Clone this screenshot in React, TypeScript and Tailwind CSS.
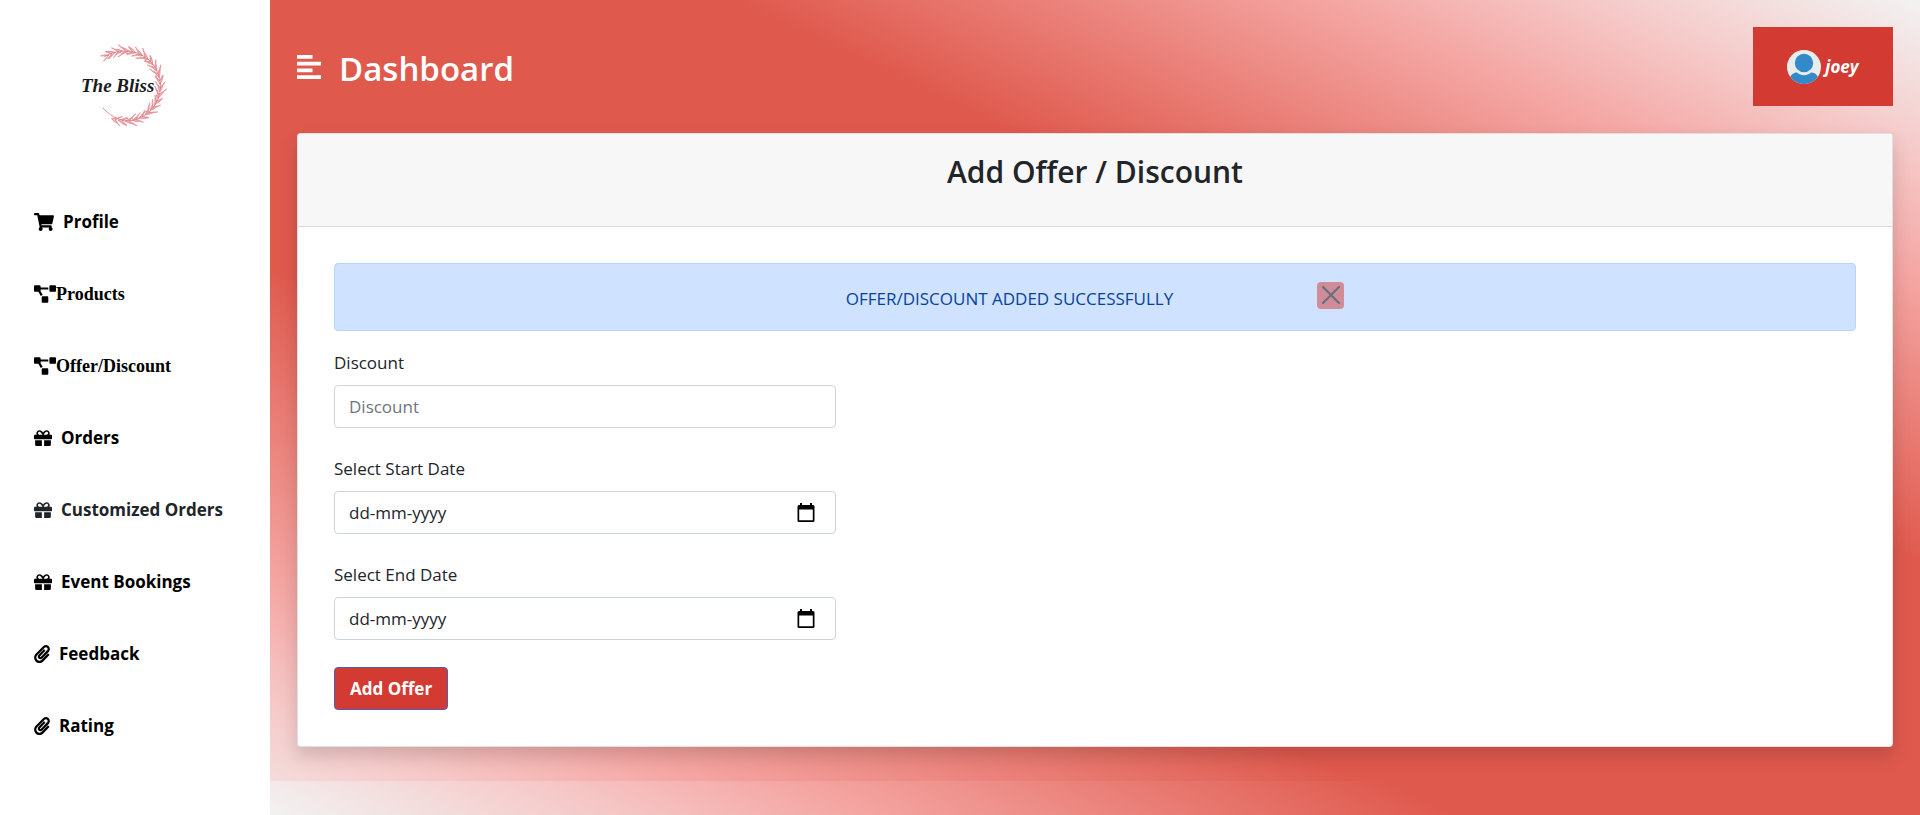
import { FaGift, FaPaperclip, FaProjectDiagram, FaShoppingCart } from "react-icons/fa";
import type { IconType } from "react-icons";

type NavItem = { label: string; icon: IconType; link: string; iconSize: string };

const SANS = "gap-[9px] font-['Open_Sans',sans-serif] text-[17px] text-black";
const SERIF = "font-['Liberation_Serif',serif] text-[18px] text-black";

const NAV: NavItem[] = [
  { label: "Profile", icon: FaShoppingCart, link: SANS, iconSize: "h-[18px] w-5" },
  { label: "Products", icon: FaProjectDiagram, link: SERIF, iconSize: "h-[18px] w-[22px]" },
  { label: "Offer/Discount", icon: FaProjectDiagram, link: SERIF, iconSize: "h-[18px] w-[22px]" },
  { label: "Orders", icon: FaGift, link: SANS, iconSize: "h-[18px] w-[18px]" },
  {
    label: "Customized Orders",
    icon: FaGift,
    link: "gap-[9px] font-['Open_Sans',sans-serif] text-[17px] text-[#212529]",
    iconSize: "h-[18px] w-[18px]",
  },
  { label: "Event Bookings", icon: FaGift, link: SANS, iconSize: "h-[18px] w-[18px]" },
  { label: "Feedback", icon: FaPaperclip, link: SANS, iconSize: "h-[18px] w-4" },
  { label: "Rating", icon: FaPaperclip, link: SANS, iconSize: "h-[18px] w-4" },
];

/* Leaves are placed in pairs along an open ring, fanning out along its direction. */
function Wreath() {
  const cx = 55;
  const cy = 51;
  const r = 35;
  const leaves: string[] = [];
  const count = 40;
  for (let i = 0; i <= count; i++) {
    const t = i / count;
    const a = ((112 - t * 230) * Math.PI) / 180;
    const x = cx + r * Math.cos(a);
    const y = cy + r * Math.sin(a);
    const len = 6 + (i % 3) * 1.6;
    for (const side of [-1, 1]) {
      const d = a - Math.PI / 2 + side * (0.4 + (i % 2) * 0.3);
      const ex = x + len * Math.cos(d);
      const ey = y + len * Math.sin(d);
      const mx = (x + ex) / 2 + side * 1.4 * Math.cos(d + Math.PI / 2);
      const my = (y + ey) / 2 + side * 1.4 * Math.sin(d + Math.PI / 2);
      leaves.push(
        `M${x.toFixed(1)} ${y.toFixed(1)}Q${mx.toFixed(1)} ${my.toFixed(1)} ${ex.toFixed(1)} ${ey.toFixed(1)}Z`,
      );
    }
  }
  return (
    <g stroke="#e39298" fill="#f3c0c3" strokeWidth="0.8" strokeLinecap="round">
      <path d={leaves.join("")} />
      <path d="M33 73C39 80 48 85 56 86A35 35 0 0 0 55 16C47 16 40 18 34 22" fill="none" stroke="#d9777f" />
    </g>
  );
}

function Logo() {
  return (
    <svg viewBox="0 0 110 100" className="h-[100px] w-[110px]" role="img" aria-label="The Bliss">
      <Wreath />
      <text
        x="11"
        y="57"
        fill="#1b1b1b"
        fontFamily="'Liberation Serif', serif"
        fontStyle="italic"
        fontWeight="700"
        fontSize="19"
      >
        The Bliss
      </text>
    </svg>
  );
}

function Avatar() {
  return (
    <svg viewBox="0 0 34 34" className="h-[34px] w-[34px]" aria-hidden="true">
      <clipPath id="avatar-clip">
        <circle cx="17" cy="17" r="17" />
      </clipPath>
      <g clipPath="url(#avatar-clip)">
        <rect width="34" height="34" fill="#e9ecec" />
        <path d="M2 29C4 24 8 22 10 22.500C14 26 20 26 24 22.500C27 22 30 24 32 29V34H2Z" fill="#3489c9" />
        <circle cx="17" cy="13" r="9.200" fill="#3489c9" />
      </g>
    </svg>
  );
}

function MenuIcon() {
  return (
    <svg viewBox="0 0 24 24" className="h-6 w-6" fill="currentColor" aria-hidden="true">
      <path d="M0 0H15.500V3.800H0ZM0 6.700H24V10.500H0ZM0 13.500H15.500V17.300H0ZM0 20.200H24V24H0Z" />
    </svg>
  );
}

function CalendarIcon() {
  return (
    <svg viewBox="0 0 18 20" className="h-5 w-[18px]" aria-hidden="true">
      <path
        fill="#000"
        fillRule="evenodd"
        d="M3 0H5V2H13V0H15V2H16A1.500 1.500 0 0 1 17.500 3.500V17.500A1.500 1.500 0 0 1 16 19H2A1.500 1.500 0 0 1 .5 17.500V3.500A1.500 1.500 0 0 1 2 2H3ZM2.200 6.500V17.300H15.800V6.500Z"
      />
    </svg>
  );
}

function DateField({ id, label }: { id: string; label: string }) {
  return (
    <div className="mb-[27px]">
      <label htmlFor={id} className="mb-[9px] block leading-[27px]">
        {label}
      </label>
      <div className="flex h-[43px] w-[33%] items-center rounded border border-[#ced4da] bg-white pr-5 pl-[14px]">
        <input
          id={id}
          type="text"
          placeholder="dd-mm-yyyy"
          className="min-w-0 flex-1 bg-transparent outline-none placeholder:text-[#212529]"
        />
        <button type="button" aria-label={`Open calendar: ${label}`}>
          <CalendarIcon />
        </button>
      </div>
    </div>
  );
}

export default function App() {
  return (
    <div className="flex min-h-screen font-['Open_Sans',sans-serif] text-[17px] text-[#212529]">
      <aside className="w-[270px] shrink-0 bg-white">
        <div className="flex h-[186px] pt-[35px] pl-[70px]">
          <Logo />
        </div>
        <nav>
          <ul>
            {NAV.map(({ label, icon: Icon, link, iconSize }) => (
              <li key={label}>
                <a href="#" className={`flex h-[72px] items-center pl-[34px] font-bold ${link}`}>
                  <Icon className={iconSize} />
                  {label}
                </a>
              </li>
            ))}
          </ul>
        </nav>
      </aside>

      <div className="flex min-w-0 flex-1 flex-col bg-[linear-gradient(to_bottom_left,#f2f2f2_0%,#f5c9c8_10%,#f4a5a2_18%,#df594d_36%,#df594d_64%,#f4a5a2_82%,#f5c9c8_90%,#f2f2f2_100%)]">
        <main className="bg-[linear-gradient(to_bottom_left,#f2f2f2_0%,#f5c9c8_10%,#f4a5a2_18%,#df594d_36%,#df594d_67%,#f4a5a2_87%,#f5c9c8_95%,#f2f2f2_106%)] px-[27px] pt-[27px] pb-[34px]">
          <header className="mb-[27px] flex items-center justify-between">
            <div className="flex items-center gap-[18px] text-white">
              <button type="button" aria-label="Toggle menu">
                <MenuIcon />
              </button>
              <h2 className="pt-1 text-[33px] leading-[43px] font-semibold">Dashboard</h2>
            </div>
            <button
              type="button"
              className="flex h-[79px] w-[140px] items-center justify-center gap-1 bg-[#d33a32] font-bold text-white italic"
            >
              <Avatar />
              joey
            </button>
          </header>

          <section className="rounded border border-black/12 bg-white shadow-[0_9px_18px_rgba(0,0,0,0.15)]">
            <div className="h-[93px] border-b border-black/12 bg-[#f7f7f7] pt-[18px] text-center">
              <h3 className="text-[30px] leading-[40px] font-semibold">Add Offer / Discount</h3>
            </div>
            <div className="p-9">
              <div className="mb-[18px] flex h-[68px] items-center justify-center gap-36 rounded border border-[#b6d4fe] bg-[#cfe2ff] text-[#084298]">
                <p className="pt-1">OFFER/DISCOUNT ADDED SUCCESSFULLY</p>
                <button
                  type="button"
                  aria-label="Close"
                  className="mb-1 flex h-[27px] w-[27px] items-center justify-center rounded bg-[#d33a32] opacity-50"
                >
                  <svg viewBox="0 0 18 18" className="h-[18px] w-[18px]" aria-hidden="true">
                    <path d="M1 1L17 17M17 1L1 17" stroke="#000" strokeWidth="2.200" strokeLinecap="round" />
                  </svg>
                </button>
              </div>
              <form>
                <div className="mb-[27px]">
                  <label htmlFor="discount" className="mb-[9px] block leading-[27px]">
                    Discount
                  </label>
                  <input
                    id="discount"
                    type="text"
                    placeholder="Discount"
                    className="h-[43px] w-[33%] rounded border border-[#ced4da] bg-white px-[14px] outline-none placeholder:text-[#6c757d]"
                  />
                </div>
                <DateField id="start-date" label="Select Start Date" />
                <DateField id="end-date" label="Select End Date" />
                <button
                  type="button"
                  className="h-[43px] rounded border border-[#4f5fb5] bg-[#d33a32] px-[15px] font-bold text-white"
                >
                  Add Offer
                </button>
              </form>
            </div>
          </section>
        </main>
      </div>
    </div>
  );
}
